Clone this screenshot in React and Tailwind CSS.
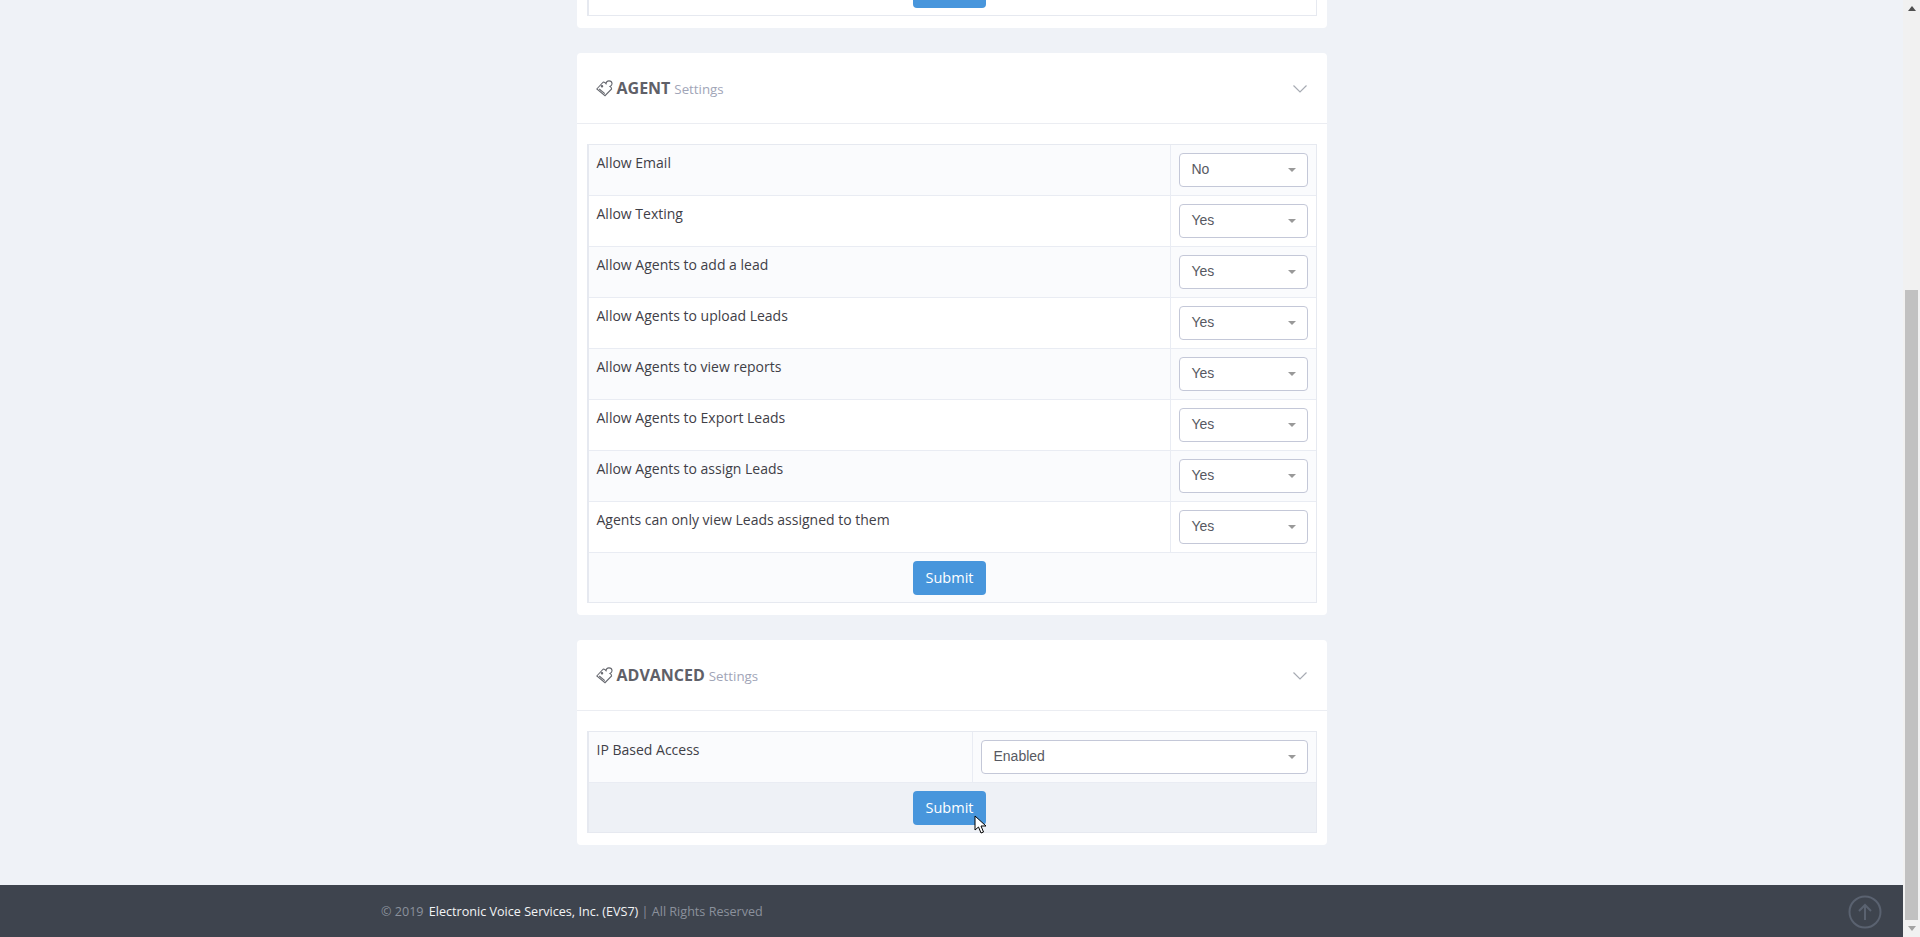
const rows = ["Allow Email","Allow Texting","Allow Agents to add a lead","Allow Agents to upload Leads","Allow Agents to view reports","Allow Agents to Export Leads","Allow Agents to assign Leads","Agents can only view Leads assigned to them"];

function TagIcon() {
  return (
    <svg width="17" height="17" viewBox="0 0 17 17" fill="none" stroke="#66686f" strokeWidth="1.1" className="shrink-0">
      <path d="M0.8 9 L7.3 2 Q9 2.2 10 3.6 Q10.6 0.8 13 0.9 Q15.8 1 16 3.4 Q16.2 5.4 14 6.6 Q15.6 7.4 15.6 9 L9 15.7 Z" />
      <path d="M3.2 9 L8.8 13.6" />
      <circle cx="6" cy="6.2" r="0.7" />
    </svg>
  );
}

function Chevron() {
  return (
    <svg width="14" height="8" viewBox="0 0 14 8" fill="none" stroke="#a7abb3" strokeWidth="1.2" className="mt-[1px]"><path d="M0.5 0.5 L7 7 L13.5 0.5" /></svg>
  );
}

function Select({ value }) {
  return (
    <div className="h-[34px] w-full border border-[#c4c8d8] rounded-[4px] bg-white flex items-center justify-between pl-[12px] pr-[11px] font-['Liberation_Sans',sans-serif] text-[14px] text-[#575962]">
      <span className="-mt-[1px]">{value}</span>
      <span className="w-0 h-0 border-x-[4px] border-x-transparent border-t-[4px] border-t-[#999]" />
    </div>
  );
}

function SubmitRow({ bg }) {
  return (
    <div className={`h-[50px] flex items-center justify-center border-t border-[#e9ecf3] ${bg}`}>
      <button className="h-[34px] w-[73px] -ml-[5px] rounded-[4px] bg-[#4896dc] text-white text-[14.5px]">Submit</button>
    </div>
  );
}

function Row({ label, value, striped, selectCol }) {
  return (
    <div className={`flex h-[51px] border-t border-[#e9ecf3] first:border-t-0 first:h-[50px] ${striped ? "bg-[#fafbfd]" : "bg-white"}`}>
      <div className="flex-1 px-[8px] pt-[8px] text-[14px] leading-[19px] text-[#3f4047]">{label}</div>
      <div className={`${selectCol} shrink-0 border-l border-[#e9ecf3] px-[8px] pt-[8px]`}>
        <Select value={value} />
      </div>
    </div>
  );
}

function Card({ title, children }) {
  return (
    <div className="w-[750px] bg-white rounded-[4px] pb-[12px]">
      <div className="h-[71px] border-b border-[#ebedf2] flex items-center justify-between pl-[19px] pr-[20px]">
        <div className="flex items-center">
          <TagIcon />
          <span className="ml-[4px] text-[16px] font-bold text-[#5f6068]">{title}</span>
          <span className="ml-[4px] mt-[4px] text-[13.3px] text-[#a1a5b7]">Settings</span>
        </div>
        <Chevron />
      </div>
      <div className="mt-[20px] mx-[10px] border border-[#e6e9f0] border-l-2">
        {children}
      </div>
    </div>
  );
}

export default function App() {
  return (
    <div className="flex h-[937px] overflow-hidden font-['Open_Sans',sans-serif] bg-[#eff2f7]">
      <div className="relative w-[1903px] h-full flex flex-col justify-end overflow-hidden">
        <div className="flex flex-col items-center">
          <div className="w-[750px] bg-white rounded-b-[4px] pb-[12px] px-[10px]">
            <div className="h-[16px] border border-t-0 border-l-2 border-[#e6e9f0] flex justify-center">
              <div className="h-[8px] w-[73px] -ml-[5px] rounded-b-[4px] bg-[#4896dc]" />
            </div>
          </div>
          <div className="mt-[25px]">
            <Card title="AGENT">
              {rows.map((r, i) => (
                <Row key={r} label={r} value={i === 0 ? "No" : "Yes"} striped={i % 2 === 0} selectCol="w-[146px]" />
              ))}
              <SubmitRow bg="bg-[#fafbfd]" />
            </Card>
          </div>
          <div className="mt-[25px]">
            <Card title="ADVANCED">
              <Row label="IP Based Access" value="Enabled" striped selectCol="w-[344px]" />
              <SubmitRow bg="bg-[#eef1f6]" />
            </Card>
          </div>
        </div>
        <div className="mt-[40px] h-[52px] shrink-0 bg-[#3e444e] flex items-center pl-[381px] pt-[2px] text-[12.6px] text-[#8b919c]">
          <span>© 2019&nbsp;</span>
          <span className="ml-[2px] text-[#f2f3f5]">Electronic Voice Services, Inc. (EVS7)</span>
          <span>&nbsp;|&nbsp;All Rights Reserved</span>
        </div>
        <svg className="absolute left-[1848px] top-[895px]" width="34" height="34" viewBox="0 0 34 34" fill="none" stroke="#5a6270" strokeWidth="2">
          <circle cx="17" cy="17" r="15.5" />
          <path d="M17 25 V10 M11 16 L17 10 L23 16" />
        </svg>
        <svg className="absolute left-[974px] top-[815px]" width="14" height="20" viewBox="0 0 14 20">
          <path d="M1 1 V15 L4.5 12 L7 18 L9.5 17 L7 11 H12 Z" fill="#fff" stroke="#000" strokeWidth="1" />
        </svg>
      </div>
      <div className="w-[17px] h-full bg-[#f1f1f1] flex flex-col items-center justify-between shrink-0">
        <div className="mt-[6px] w-0 h-0 border-x-[4px] border-x-transparent border-b-[5px] border-b-[#505050]" />
        <div className="mt-[279px] w-[13px] flex-1 bg-[#c1c1c1]" />
        <div className="mb-[6px] mt-[6px] w-0 h-0 border-x-[4px] border-x-transparent border-t-[5px] border-t-[#a3a3a3]" />
      </div>
    </div>
  );
}
